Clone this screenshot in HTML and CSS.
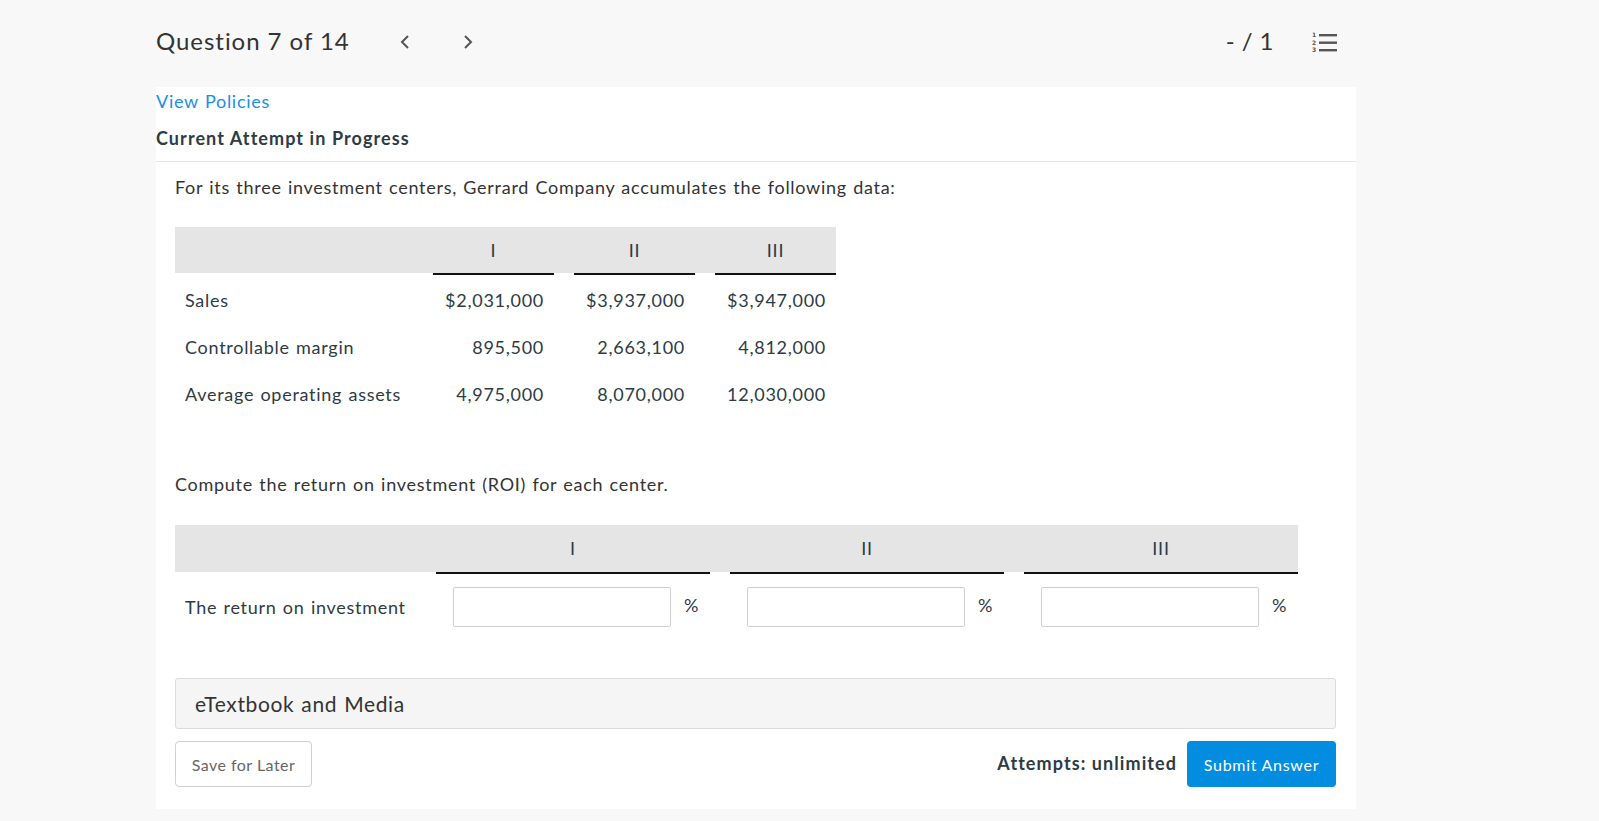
FILE: index.html
```html
<!DOCTYPE html>
<html lang="en">
<head>
<meta charset="utf-8">
<title>Question 7 of 14</title>
<link rel="stylesheet" href="styles.css">
</head>
<body>
<div class="page">
  <header class="topbar">
    <div class="title">Question 7 of 14</div>
    <nav class="pager">
      <span class="chev prev"><svg width="12" height="16" viewBox="0 0 12 16"><polyline points="9,2 3,8 9,14" fill="none" stroke="#555" stroke-width="2"/></svg></span>
      <span class="chev next"><svg width="12" height="16" viewBox="0 0 12 16"><polyline points="3,2 9,8 3,14" fill="none" stroke="#555" stroke-width="2"/></svg></span>
    </nav>
    <div class="spacer"></div>
    <div class="score">- / 1</div>
    <span class="listicon"><svg width="25" height="20" viewBox="0 0 25 20">
      <text x="0" y="5" class="num">1</text>
      <text x="0" y="12.5" class="num">2</text>
      <text x="0" y="20" class="num">3</text>
      <rect x="7" y="2" width="18" height="2.4" fill="#555"/>
      <rect x="7" y="9.5" width="18" height="2.4" fill="#555"/>
      <rect x="7" y="17" width="18" height="2.4" fill="#555"/>
    </svg></span>
  </header>

  <main class="panel">
    <div class="meta">
      <a class="policies" href="#">View Policies</a>
      <div class="attempt">Current Attempt in Progress</div>
    </div>

    <section class="question">
      <p class="intro">For its three investment centers, Gerrard Company accumulates the following data:</p>

      <div class="data">
        <div class="row head">
          <div></div>
          <div class="colh">I</div>
          <div class="colh">II</div>
          <div class="colh">III</div>
        </div>
        <div class="row body first">
          <div class="lbl">Sales</div>
          <div class="val">$2,031,000</div>
          <div class="val">$3,937,000</div>
          <div class="val">$3,947,000</div>
        </div>
        <div class="row body">
          <div class="lbl">Controllable margin</div>
          <div class="val">895,500</div>
          <div class="val">2,663,100</div>
          <div class="val">4,812,000</div>
        </div>
        <div class="row body">
          <div class="lbl">Average operating assets</div>
          <div class="val">4,975,000</div>
          <div class="val">8,070,000</div>
          <div class="val">12,030,000</div>
        </div>
      </div>

      <p class="prompt">Compute the return on investment (ROI) for each center.</p>

      <div class="answers">
        <div class="arow head">
          <div></div>
          <div class="colh">I</div>
          <div class="colh">II</div>
          <div class="colh">III</div>
        </div>
        <div class="arow entry">
          <div class="lbl">The return on investment</div>
          <div class="cell"><input type="text" class="box"><span class="pct">%</span></div>
          <div class="cell"><input type="text" class="box"><span class="pct">%</span></div>
          <div class="cell"><input type="text" class="box"><span class="pct">%</span></div>
        </div>
      </div>

      <div class="media">eTextbook and Media</div>

      <div class="footer">
        <button class="save">Save for Later</button>
        <div class="spacer"></div>
        <span class="attempts">Attempts: unlimited</span>
        <button class="submit">Submit Answer</button>
      </div>
    </section>
  </main>
</div>
</body>
</html>
```
FILE: styles.css
```css
html, body {
  margin: 0;
  padding: 0;
}
body {
  background: #f8f8f8;
  font-family: Lato, "Open Sans", "Liberation Sans", sans-serif;
  color: #2d3b45;
  letter-spacing: 0.045em;
  word-spacing: 1px;
  font-variant-ligatures: none;
  font-feature-settings: "liga" 0, "clig" 0;
}
.page {
  width: 1200px;
  margin-left: 156px;
}
.topbar {
  height: 87px;
  box-sizing: border-box;
  padding-bottom: 5px;
  display: flex;
  align-items: center;
  padding-right: 19px;
}
.title {
  font-size: 24px;
  color: #333;
  line-height: 30px;
  letter-spacing: 0.04em;
  word-spacing: 0;
}
.pager {
  display: flex;
  align-items: center;
  margin-left: 49px;
  gap: 51px;
  padding-top: 2px;
}
.chev {
  display: flex;
}
.spacer {
  flex: 1;
}
.score {
  font-size: 24px;
  color: #333;
  line-height: 30px;
  letter-spacing: 0.02em;
  word-spacing: 0;
  margin-right: 38px;
}
.listicon {
  display: flex;
  padding-top: 2px;
}
.listicon .num {
  font-family: "DejaVu Sans", sans-serif;
  font-size: 6px;
  font-weight: bold;
  letter-spacing: 0;
  fill: #555;
}
.panel {
  background: #fff;
  padding-bottom: 22px;
}
.meta {
  padding-top: 2px;
  padding-bottom: 11px;
  border-bottom: 1px solid #e8e8e8;
}
.policies {
  display: block;
  font-size: 18px;
  line-height: 24px;
  color: #1a8fe3;
  text-decoration: none;
}
.attempt {
  margin-top: 13px;
  font-size: 18px;
  line-height: 24px;
  font-weight: bold;
  letter-spacing: 0.06em;
  word-spacing: 0;
  color: #2d3b45;
}
.question {
  padding: 0 20px 0 19px;
}
.intro, .prompt {
  margin: 13px 0 0;
  font-size: 18px;
  line-height: 24px;
  color: #333;
}
.data {
  margin-top: 28px;
}
.row {
  display: grid;
  grid-template-columns: 238px repeat(3, 121px);
  column-gap: 20px;
  width: 661px;
}
.row.head {
  background: #e5e5e5;
  grid-template-rows: 46px;
}
.arow.head {
  background: #e5e5e5;
  grid-template-rows: 47px;
}
.colh {
  text-align: center;
  font-size: 18px;
  line-height: 46px;
  color: #2d3b45;
  border-bottom: 2px solid #111;
  margin-bottom: -2px;
}
.row.body {
  height: 47px;
  align-items: center;
  font-size: 18px;
  color: #2d3b45;
}
.row.body.first {
  margin-top: 3px;
}
.lbl {
  padding-left: 10px;
  font-size: 18px;
  color: #2d3b45;
}
.val {
  text-align: right;
  padding-right: 10px;
}
.prompt {
  margin-top: 55px;
}
.answers {
  margin-top: 29px;
}
.arow {
  display: grid;
  grid-template-columns: 241px repeat(3, 274px);
  column-gap: 20px;
  width: 1123px;
}
.arow.entry {
  margin-top: 2px;
  height: 65px;
  align-items: center;
}
.cell {
  display: flex;
  align-items: center;
  padding-left: 17px;
}
.box {
  width: 218px;
  height: 40px;
  box-sizing: border-box;
  border: 1px solid #cfcfcf;
  border-radius: 2px;
  background: #fff;
  margin: 0 13px 0 0;
  padding: 0;
}
.pct {
  font-size: 18px;
  color: #2d3b45;
  margin-top: -4px;
}
.media {
  margin-top: 39px;
  height: 51px;
  box-sizing: border-box;
  border: 1px solid #dcdcdc;
  border-radius: 3px;
  background: #f5f5f5;
  display: flex;
  align-items: center;
  padding-left: 19px;
  font-size: 21px;
  letter-spacing: 0.03em;
  color: #333;
}
.footer {
  margin-top: 12px;
  display: flex;
  align-items: center;
}
.save {
  width: 137px;
  height: 46px;
  border: 1px solid #cfcfcf;
  border-radius: 4px;
  background: #fff;
  font-family: Lato, "Open Sans", sans-serif;
  font-size: 16px;
  letter-spacing: 0.03em;
  font-variant-ligatures: none;
  color: #666;
  padding: 0;
}
.attempts {
  font-size: 18px;
  font-weight: bold;
  letter-spacing: 0.06em;
  word-spacing: 0;
  color: #2d3b45;
  margin-right: 10px;
  margin-top: -3px;
}
.submit {
  width: 149px;
  height: 46px;
  border: none;
  border-radius: 4px;
  background: #038de1;
  color: #fff;
  font-family: Lato, "Open Sans", sans-serif;
  font-size: 16px;
  letter-spacing: 0.045em;
  word-spacing: 0;
  font-variant-ligatures: none;
  padding: 0;
}
```
